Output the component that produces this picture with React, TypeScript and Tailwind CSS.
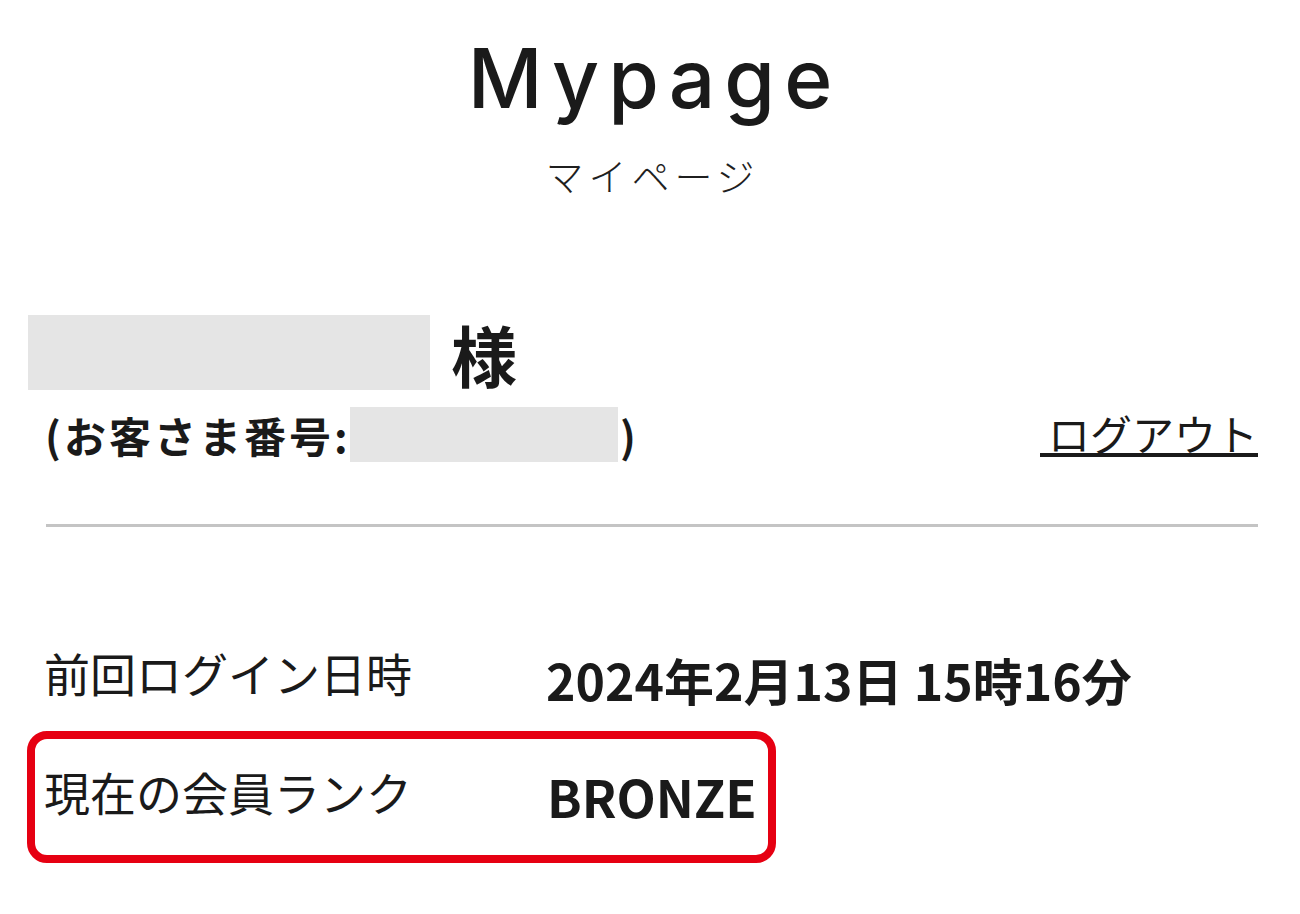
import React from "react";

const jp = { fontFamily: '"Noto Sans CJK JP", "Noto Sans", sans-serif' };

export default function App() {
  return (
    <div className="w-[1300px] h-[914px] bg-white text-[#1a1a1a] overflow-hidden" style={jp}>
      {/* Heading */}
      <div className="pt-[38px] flex flex-col items-center">
        <h1
          className="text-[82px] leading-none font-medium tracking-[9px] pl-[9px] text-[#1a1a1a]"
          style={{ fontFamily: 'Inter, "Noto Sans", sans-serif' }}
        >
          Mypage
        </h1>
        <div className="mt-[36px] text-[38px] leading-none font-light tracking-[5px] pl-[5px] text-[#1f1f1f]">
          マイページ
        </div>
      </div>

      {/* Name row */}
      <div className="mt-[121px] pl-[28px] flex items-center">
        <div className="w-[402px] h-[75px] bg-[#e5e5e5]" />
        <div className="ml-[21px] text-[66px] leading-none font-bold">様</div>
      </div>

      {/* Customer number row */}
      <div className="mt-[17px] pl-[45px] pr-[42px] flex items-center">
        <span className="w-[305px] text-[42px] leading-none font-bold tracking-[3px] whitespace-nowrap">
          (お客さま番号:
        </span>
        <div className="w-[268px] h-[55px] bg-[#e5e5e5]" />
        <span className="ml-[2px] text-[42px] leading-none font-bold">)</span>
        <div className="ml-auto">
          <a className="inline-block text-[42px] leading-[40px] pl-[8px] border-b-4 border-[#1a1a1a] text-[#1a1a1a] no-underline cursor-pointer">
            ログアウト
          </a>
        </div>
      </div>

      {/* Divider */}
      <div className="mt-[62px] ml-[46px] mr-[42px] h-[3px] bg-[#c4c4c4]" />

      {/* Last login */}
      <div className="mt-[122px] pl-[44px] flex items-start">
        <div className="w-[502px] text-[46px] leading-none whitespace-nowrap">前回ログイン日時</div>
        <div className="mt-[5px] text-[50px] leading-none font-bold whitespace-nowrap">
          2024年2月13日 15時16分
        </div>
      </div>

      {/* Rank box */}
      <div className="mt-[27px] ml-[27px] w-[749px] border-[8px] border-[#e60012] rounded-[20px] pl-[9px] pt-[29px] pb-[33px] flex items-start">
        <div className="w-[503px] text-[46px] leading-none whitespace-nowrap">現在の会員ランク</div>
        <div className="mt-[3px] text-[51px] leading-none font-bold">BRONZE</div>
      </div>
    </div>
  );
}
